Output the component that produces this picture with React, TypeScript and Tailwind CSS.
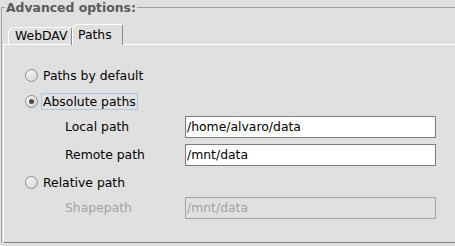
import React from 'react'

const font = { fontFamily: '"DejaVu Sans", Verdana, sans-serif' }

function Radio({ checked }: { checked?: boolean }) {
  return (
    <span className="w-[13px] h-[13px] rounded-full border border-[#8c8c8c] bg-gradient-to-br from-[#fafafa] to-[#d4d4d4] flex items-center justify-center shrink-0">
      {checked && <span className="w-[5px] h-[5px] rounded-full bg-[#4a4a4a]" />}
    </span>
  )
}

function Option({ label, checked, focused }: { label: string; checked?: boolean; focused?: boolean }) {
  return (
    <div className="flex items-center h-[20px] pl-[21px]">
      <Radio checked={checked} />
      <span
        className={
          focused
            ? 'ml-[3px] px-[1px] border border-[#a9c6ea] leading-[15px]'
            : 'ml-[3px] px-[1px] border border-transparent leading-[15px]'
        }
      >
        {label}
      </span>
    </div>
  )
}

function PathRow({ label, value, disabled }: { label: string; value: string; disabled?: boolean }) {
  return (
    <div className="flex items-center h-[22px] pl-[61px]">
      <span className={disabled ? 'w-[120px] text-[#a3a3a3]' : 'w-[120px] text-black'}>{label}</span>
      <div
        className={
          disabled
            ? 'w-[251px] h-[22px] border border-[#a3a3a3] bg-[#e0e0e0] text-[#a3a3a3] flex items-center pl-[1px]'
            : 'w-[251px] h-[22px] border border-[#7c7c7c] bg-white text-black flex items-center pl-[1px]'
        }
      >
        {value}
      </div>
    </div>
  )
}

export default function App() {
  return (
    <div className="w-[455px] h-[246px] bg-[#e0e0e0] overflow-hidden text-[12.4px] text-black" style={font}>
      <fieldset className="ml-[1px] border-l border-t border-[#a0a0a0] w-[460px]">
        <legend className="ml-[3px] px-[1px] font-bold text-[#5a5a5a] leading-[15px] text-[12.4px]">
          Advanced options:
        </legend>

        {/* tabs */}
        <div className="ml-[1px] mt-[9px] flex items-end pl-[5px] h-[20px] relative z-10">
          <div className="w-[64px] h-[17px] border-l border-t border-white border-r border-r-[#8a8a8a] rounded-tl-[6px] rounded-tr-[2px] pl-[6px] leading-[15px] mb-[-1px] h-[18px]">
            WebDAV
          </div>
          <div className="w-[51px] h-[21px] border-l border-t border-white border-r border-r-[#8a8a8a] rounded-tl-[6px] rounded-tr-[2px] pl-[5px] pt-[2px] leading-[15px] bg-[#e0e0e0] mb-[-1px]">
            Paths
          </div>
        </div>

        {/* panel */}
        <div className="ml-[1px] h-[199px] border-t border-l border-white border-b border-b-[#808080]">
          <div className="pt-[20px]">
            <Option label="Paths by default" />
            <div className="mt-[6px]">
              <Option label="Absolute paths" checked focused />
            </div>
            <div className="mt-[5px]">
              <PathRow label="Local path" value="/home/alvaro/data" />
            </div>
            <div className="mt-[6px]">
              <PathRow label="Remote path" value="/mnt/data" />
            </div>
            <div className="mt-[6px]">
              <Option label="Relative path" />
            </div>
            <div className="mt-[5px]">
              <PathRow label="Shapepath" value="/mnt/data" disabled />
            </div>
          </div>
        </div>
      </fieldset>
    </div>
  )
}
